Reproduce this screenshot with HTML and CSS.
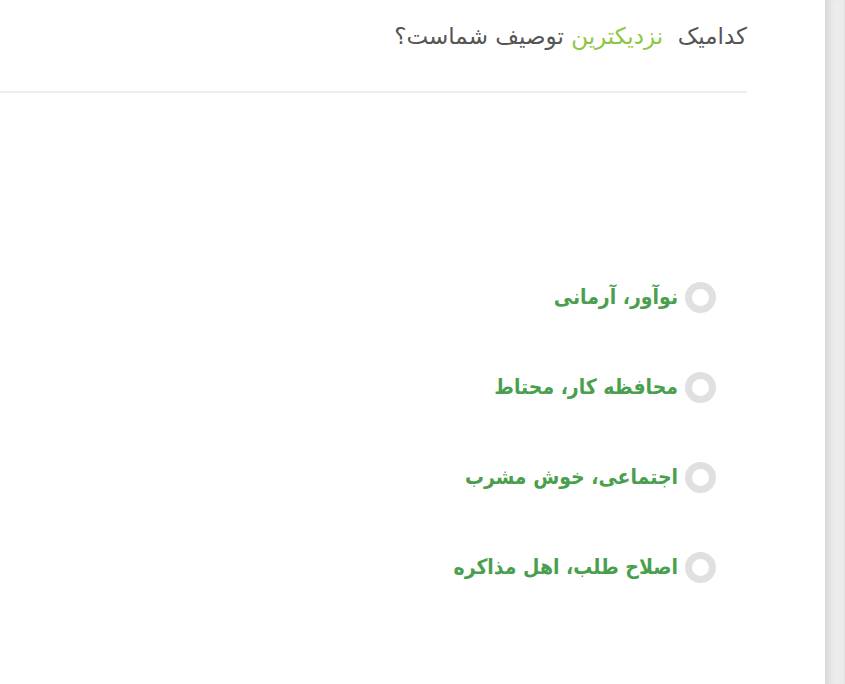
FILE: index.html
```html
<!DOCTYPE html>
<html lang="fa" dir="rtl">
<head>
<meta charset="utf-8">
<link rel="stylesheet" href="styles.css">
</head>
<body>
<div class="page">
  <div class="sidebar"></div>
  <main class="main">
    <div class="question">
      <h1 class="title">کدامیک&nbsp; <span class="hl">نزدیکترین</span> توصیف شماست؟</h1>
    </div>
    <ul class="options">
      <li class="option"><span class="radio"></span><span class="label">نوآور، آرمانی</span></li>
      <li class="option"><span class="radio"></span><span class="label">محافظه کار، محتاط</span></li>
      <li class="option"><span class="radio"></span><span class="label">اجتماعی، خوش مشرب</span></li>
      <li class="option"><span class="radio"></span><span class="label">اصلاح طلب، اهل مذاکره</span></li>
    </ul>
  </main>
</div>
</body>
</html>
```
FILE: styles.css
```css
html, body { margin: 0; padding: 0; background: #fff; }
body { font-family: "DejaVu Sans", "Noto Sans", sans-serif; }
.page { display: flex; flex-direction: row; width: 845px; height: 684px; overflow: hidden; }
.sidebar { width: 19px; flex: none; background: #ececec; box-shadow: inset 8px 0 6px -4px #d8d8d8; border-right: 1px solid #e2e2e2; }
.main { flex: 1; padding-right: 78px; }
.question { height: 93px; border-bottom: 2px solid #efefef; box-sizing: border-box; padding-top: 20px; }
.title { margin: 0; font-size: 23px; font-weight: normal; color: #555; line-height: 32px; }
.hl { color: #8dc63f; }
.options { list-style: none; margin: 0; padding: 159px 31px 0 0; }
.option { display: flex; align-items: center; gap: 7px; height: 90px; }
.radio { width: 31px; height: 31px; box-sizing: border-box; border: 7px solid #e0e0e0; border-radius: 50%; background: #fff; flex: none; }
.label { font-family: "DejaVu Sans Condensed", "DejaVu Sans", sans-serif; font-size: 21px; font-weight: bold; color: #4a9f4e; }
```
